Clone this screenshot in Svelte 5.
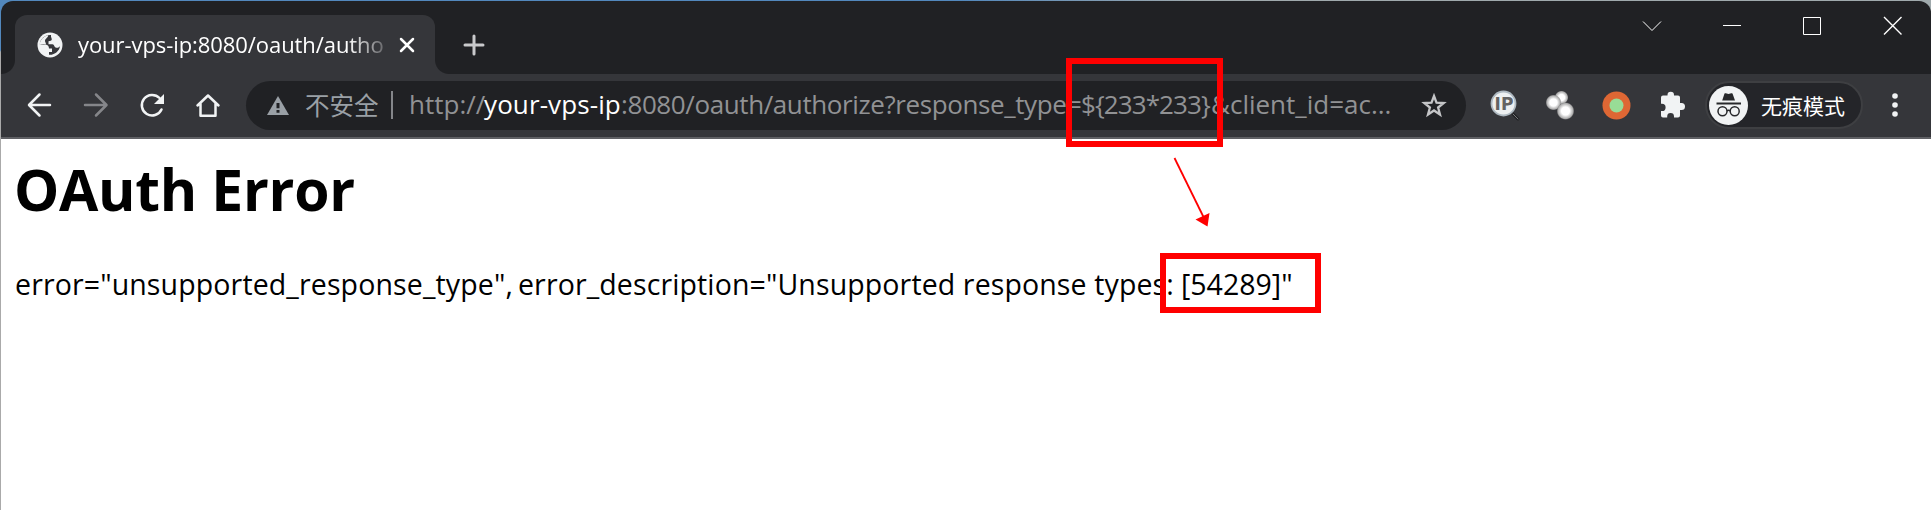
<script>
  const urlParts = [
    { text: 'http://', kind: 'scheme' },
    { text: 'your-vps-ip', kind: 'host' },
    { text: ':8080/oauth/authorize?response_type', kind: 'path' },
    { text: '=${233*233}', kind: 'value' },
    { text: '&client_id=ac...', kind: 'rest' }
  ];
</script>

<div class="window">
  <header class="tabstrip">
    <div class="tab">
      <svg class="globe" width="26" height="26" viewBox="0 0 26 26">
        <circle cx="13" cy="13" r="12.5" fill="#f1f3f4" />
        <path d="M14 3C8 2.500 3 7 2.800 12.500H7.500C10.500 12.500 12 14 12 16.500H15V20H12V22.800C17.500 23.300 22.500 19 23 14C22 15.700 20.500 16.200 18.700 15.500C17 14.800 17.500 12.300 15.500 12.200H11.500V9.300C13 9 14.800 8.800 14.800 7.300C14.800 6 13.700 5.200 14 3Z" fill="#35363a" />
        <path d="M2.500 13C3 8 6.500 4 11 3.200C11.500 5.500 8.500 6 8 8.500C7.800 10 9 10.500 9 12.500C7 11.500 5 12 2.500 13Z" fill="#f1f3f4" />
      </svg>
      <span class="title">your-vps-ip:8080/oauth/autho</span>
      <svg class="tabclose" width="16" height="16" viewBox="0 0 16 16"><path d="M2 2L14 14M14 2L2 14" stroke="#fff" stroke-width="2.5" stroke-linecap="round" /></svg>
      <i class="flare left"></i><i class="flare right"></i>
    </div>
    <svg class="newtab" width="22" height="22" viewBox="0 0 22 22"><path d="M11 2V20M2 11H20" stroke="#c9cacc" stroke-width="3" stroke-linecap="round" /></svg>
    <div class="controls">
      <svg viewBox="0 0 80 52"><path d="M31 21.500L40 30.500L49 21.500" /></svg>
      <svg viewBox="0 0 80 52"><path d="M31 25.500H49" /></svg>
      <svg viewBox="0 0 80 52"><path d="M31.500 17.500H48.500V34.500H31.500Z" /></svg>
      <svg viewBox="0 0 80 52"><path d="M32 17L49.500 34.500M49.500 17L32 34.500" stroke-width="1.400" /></svg>
    </div>
  </header>

  <nav class="toolbar">
    <svg class="btn" viewBox="0 0 56 48"><path d="M38 24H17.500M27.500 13.500L17 24L27.500 34.500" stroke="#f1f3f4" /></svg>
    <svg class="btn" viewBox="0 0 56 48"><path d="M17 24H38M28 13.500L38.500 24L28 34.500" stroke="#85868a" /></svg>
    <svg class="btn" viewBox="0 0 56 48"><path d="M37.500 28.500A10.300 10.300 0 1 1 35.500 17" stroke="#f1f3f4" /><path d="M40 13V23H30Z" fill="#f1f3f4" /></svg>
    <svg class="btn" viewBox="0 0 56 48"><path d="M17.500 24.500L28 14.500L38.500 24.500M20.500 22.500V34.700H35.500V22.500" stroke="#f1f3f4" /></svg>
    <div class="omnibox">
      <svg class="warn" width="22" height="19" viewBox="0 0 22 19"><path d="M11 0L22 19H0Z" fill="#9aa0a6" /><path d="M9.500 7H12.500V12.200H9.500ZM9.500 14H12.500V16.800H9.500Z" fill="#202124" /></svg>
      <span class="insecure">不安全</span>
      <i class="divider"></i>
      <span class="url">{#each urlParts as part}<span class={part.kind}>{part.text}</span>{/each}</span>
      <svg class="star" width="26" height="25" viewBox="0 0 26 25"><path d="M13 3L15.500 9.700L22.700 10L17.100 14.500L19 21.500L13 17.500L7 21.500L8.900 14.500L3.300 10L10.500 9.700Z" fill="none" stroke="#c4c5c7" stroke-width="2.300" /></svg>
    </div>
    <div class="extensions">
      <svg class="btn" viewBox="0 0 56 48">
        <path d="M37 33L42 38" stroke="#202124" stroke-width="3" /><path d="M37 33L42 38" stroke="#77797b" stroke-width="1" />
        <circle cx="27.500" cy="22.500" r="12" fill="#edf0f1" stroke="#aeb9c1" stroke-width="1.800" />
        <text x="28" y="29" text-anchor="middle" class="ip">IP</text>
      </svg>
      <svg class="btn" viewBox="0 0 56 48">
        <defs><radialGradient id="pearl"><stop offset="0.450" stop-color="#fff" /><stop offset="0.850" stop-color="#aaa" /><stop offset="1" stop-color="#777" stop-opacity="0" /></radialGradient></defs>
        <circle cx="29.500" cy="16.500" r="7" fill="url(#pearl)" /><circle cx="21.500" cy="21.500" r="8" fill="url(#pearl)" /><circle cx="33.500" cy="30" r="9" fill="url(#pearl)" />
      </svg>
      <svg class="btn" viewBox="0 0 56 48"><circle cx="28.500" cy="24.500" r="14" fill="#de6734" /><circle cx="28.500" cy="24.500" r="7" fill="#98dc96" /></svg>
      <svg class="btn" viewBox="0 0 56 48"><path d="M17 16.500Q17 14.500 19 14.500H23.500V14A3 3 0 0 1 30 14V14.500H34Q36 14.500 36 16.500V22H37.500A3 3 0 0 1 37.500 29H36V34.500Q36 36.500 34 36.500H30V35.500A3.300 3.300 0 0 0 23.200 35.500V36.500H19Q17 36.500 17 34.500V30H18A3.500 3.500 0 0 0 18 22.800H17Z" fill="#f1f3f4" /></svg>
    </div>
    <div class="incognito">
      <svg width="39" height="39" viewBox="0 0 39 39">
        <circle cx="19.500" cy="19.500" r="19.500" fill="#f1f3f4" />
        <path d="M13.200 14.500L15.500 7.500Q15.800 7 16.800 7.300L19.500 8L22.200 7.300Q23.200 7 23.500 7.500L26 14.500Z" fill="#27282b" />
        <path d="M7.500 17.500H32" stroke="#27282b" stroke-width="2" />
        <circle cx="13.500" cy="25.300" r="4.500" fill="none" stroke="#27282b" stroke-width="1.500" /><circle cx="25.700" cy="25.300" r="4.500" fill="none" stroke="#27282b" stroke-width="1.500" />
        <path d="M18 25Q19.600 23.700 21.200 25" fill="none" stroke="#27282b" stroke-width="1.500" />
      </svg>
      <span>无痕模式</span>
    </div>
    <svg class="menu" width="6" height="24" viewBox="0 0 6 24"><g fill="#f1f3f4"><circle cx="3" cy="3" r="2.800" /><circle cx="3" cy="12" r="2.800" /><circle cx="3" cy="21" r="2.800" /></g></svg>
  </nav>

  <main>
    <h1>OAuth Error</h1>
    <p><span class="code">error="unsupported_response_type", </span><span class="desc">error_description="Unsupported response types: </span><span class="result">[54289]"</span></p>
  </main>

  <div class="mark payload"></div>
  <svg class="arrow" width="44" height="78" viewBox="0 0 44 78"><path d="M7.500 7L37 67" stroke="#f00" stroke-width="1.800" /><path d="M42.500 62L28.500 68.500L40.500 75.500Z" fill="#f00" /></svg>
  <div class="mark answer"></div>
</div>

<style>
  :global(body) { background: #fff; }
  .window {
    position: relative;
    box-sizing: border-box;
    width: 1931px;
    height: 510px;
    overflow: hidden;
    padding: 1px 0 0 1px;
    background: linear-gradient(90deg, #5288bd 0 960px, #9fa9ac 1200px) 0 0 / 100% 20px no-repeat, linear-gradient(#5288bd 0 50px, #aaa 52px);
    font-family: "Open Sans", "Noto Sans CJK SC", sans-serif;
  }
  svg { display: block; flex: none; }
  .tabstrip {
    display: flex;
    height: 73px;
    padding-left: 14px;
    background: #202124;
    border-radius: 12px 12px 0 0;
  }
  .tab {
    position: relative;
    box-sizing: border-box;
    display: flex;
    align-items: center;
    width: 420px;
    height: 59px;
    margin-top: 14px;
    padding: 0 20px 0 22px;
    background: #35363a;
    border-radius: 12px 12px 0 0;
  }
  .flare { position: absolute; bottom: 0; width: 14px; height: 14px; }
  .flare.left { left: -14px; background: radial-gradient(circle at 0 0, #202124 13.500px, #35363a 14.500px); }
  .flare.right { right: -14px; background: radial-gradient(circle at 100% 0, #202124 13.500px, #35363a 14.500px); }
  .title {
    width: 306px;
    margin: 0 0 1px 15px;
    overflow: hidden;
    white-space: nowrap;
    color: #fff;
    font-size: 22px;
    line-height: 32px;
    letter-spacing: -0.070px;
    mask-image: linear-gradient(90deg, #000 270px, transparent 318px);
  }
  .tabclose { margin-left: 15px; }
  .newtab { margin: 33px 0 0 28px; }
  .controls { display: flex; margin-left: auto; margin-right: -1px; }
  .controls svg { width: 80px; height: 52px; margin-top: -1px; fill: none; stroke: #fff; }
  .toolbar {
    box-sizing: border-box;
    display: flex;
    align-items: center;
    height: 65px;
    padding: 0 0 1px 10.500px;
    background: #35363a;
    border-bottom: 2px solid #5f6064;
  }
  .btn { width: 56px; height: 48px; fill: none; stroke-width: 2.500; stroke-linecap: round; stroke-linejoin: round; }
  .btn path[fill], .btn circle { stroke-linejoin: miter; }
  .omnibox {
    box-sizing: border-box;
    display: flex;
    flex: none;
    align-items: center;
    width: 1220px;
    height: 49px;
    margin-left: 10.500px;
    padding: 0 19px 0 21px;
    background: #202124;
    border-radius: 25px;
  }
  .insecure { width: 75px; margin-left: 16px; color: #9aa0a6; font: 24.500px/36px "Noto Sans CJK SC", sans-serif; white-space: nowrap; }
  .divider { width: 2px; height: 28px; margin-left: 11px; background: #84868a; }
  .url { flex: 1; display: flex; margin: 0 0 2px 16px; color: #919294; font-size: 26px; line-height: 36px; white-space: nowrap; }
  .scheme { width: 75px; }
  .host { width: 137px; color: #fff; letter-spacing: 0.100px; }
  .path { width: 446px; letter-spacing: -0.400px; }
  .value { width: 144px; letter-spacing: -0.900px; }
  .extensions { display: flex; margin-left: 10px; }
  .ip { font: 700 17px "DejaVu Sans", sans-serif; fill: #636363; stroke: none; }
  .incognito {
    box-sizing: border-box;
    display: flex;
    flex: none;
    align-items: center;
    width: 158px;
    height: 48px;
    margin-left: 5px;
    padding-left: 2px;
    border: 2px solid #3e3f42;
    border-radius: 24px;
    background: #242529;
    color: #fff;
    font: 21px/30px "Noto Sans CJK SC", sans-serif;
  }
  .incognito span { margin-left: 13px; white-space: nowrap; }
  .menu { margin-left: 29px; }
  main { height: 371px; padding-left: 14px; box-sizing: border-box; background: #fff; color: #000; }
  h1 { margin: 0 0 0 -1px; padding-top: 10px; font-size: 57px; line-height: 80px; font-weight: 700; letter-spacing: -0.300px; }
  p { display: flex; margin: 35px 0 0; font-size: 28.500px; line-height: 40px; white-space: pre; }
  .code { width: 503px; letter-spacing: 0.130px; }
  .desc { width: 663px; letter-spacing: 0.120px; }
  .mark { position: absolute; box-sizing: border-box; border: 6px solid #f00; }
  .payload { left: 1066px; top: 58px; width: 157px; height: 89px; }
  .answer { left: 1160px; top: 253px; width: 161px; height: 60px; }
  .arrow { position: absolute; left: 1167px; top: 151px; }
</style>
